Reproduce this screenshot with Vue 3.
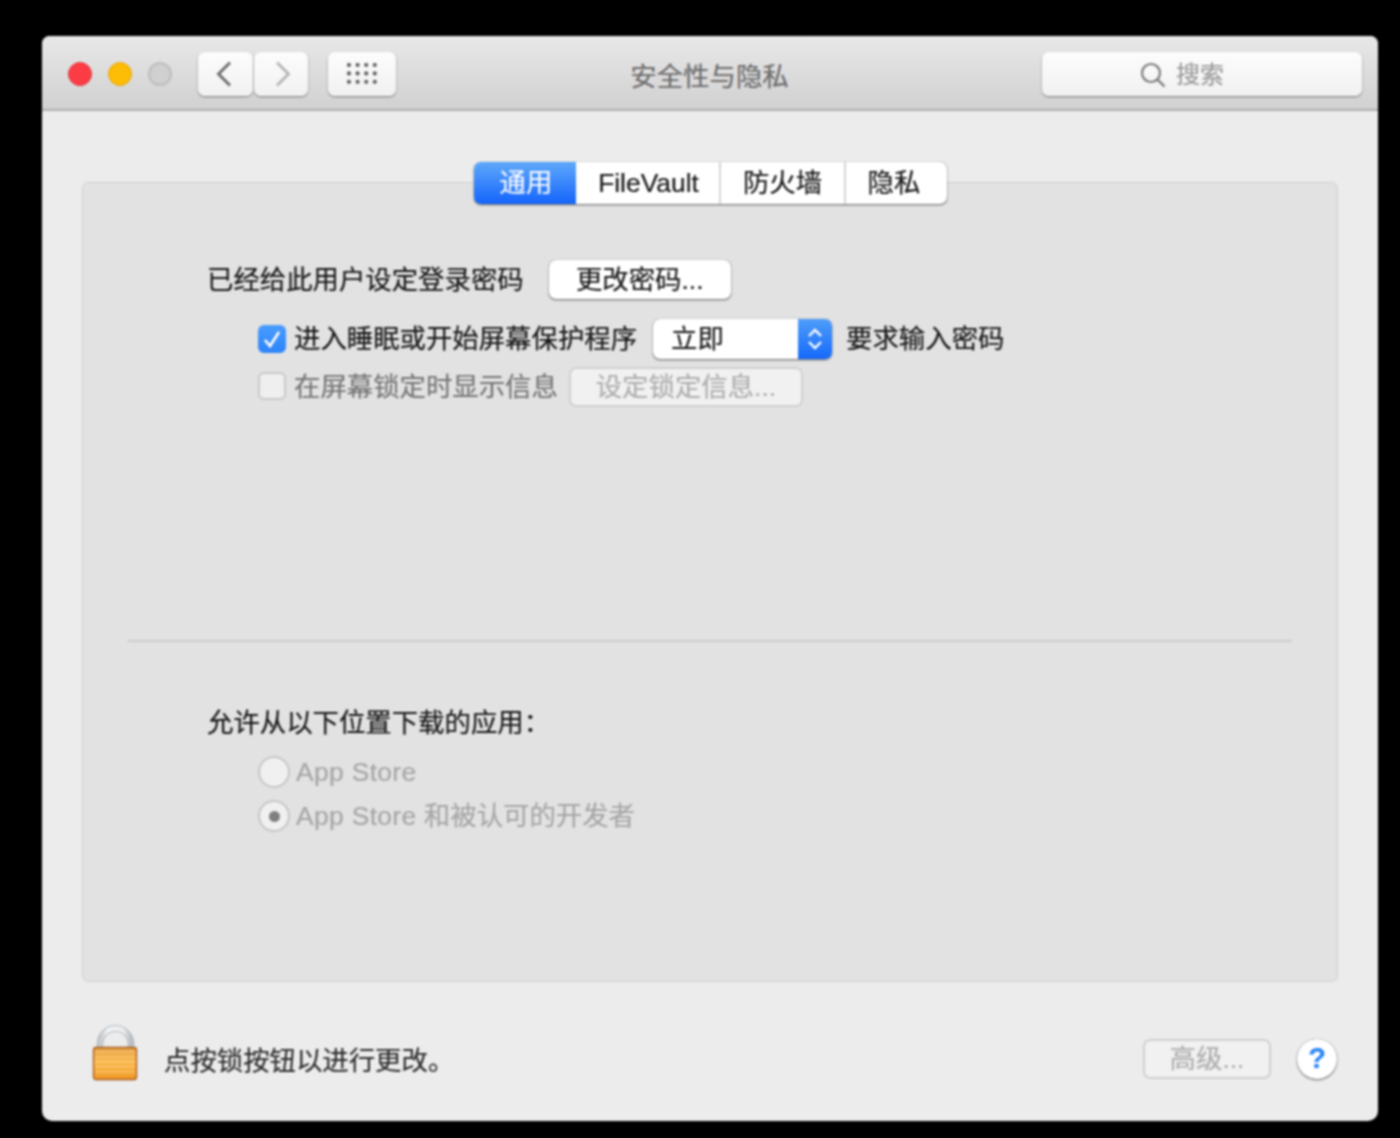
<script setup>
const tabs = [
  { label: '通用', width: 102, active: true, cls: 'nudge-right' },
  { label: 'FileVault', width: 145, cls: 'nudge-right' },
  { label: '防火墙', width: 125 },
  { label: '隐私', width: 101, cls: 'nudge-left' }
]
const dots = Array.from({ length: 12 }, (_, i) => ({ cx: 2 + (i % 4) * 8.6, cy: 2 + Math.floor(i / 4) * 8.4 }))
const stripes = [1051, 1056, 1061, 1066, 1071]
</script>

<template>
  <div class="window">
    <header class="titlebar">
      <div class="bar-left">
        <div class="lights">
          <span class="light red"></span>
          <span class="light yellow"></span>
          <span class="light grey"></span>
        </div>
        <div class="nav">
          <button class="tool nav-btn back">
            <svg width="16" height="26" viewBox="0 0 16 26"><path d="M14 1.5 2.5 13 14 24.5" fill="none" stroke="#6a6a6a" stroke-width="2.8" /></svg>
          </button>
          <button class="tool nav-btn next">
            <svg width="16" height="26" viewBox="0 0 16 26"><path d="M2 1.5 13.5 13 2 24.5" fill="none" stroke="#b5b5b5" stroke-width="2.8" /></svg>
          </button>
        </div>
        <button class="tool grid-btn">
          <svg width="30" height="21" viewBox="0 0 30 21"><circle v-for="(d, i) in dots" :key="i" :cx="d.cx" :cy="d.cy" r="2.1" fill="#5f5f5f" /></svg>
        </button>
      </div>
      <h1 class="title">安全性与隐私</h1>
      <div class="bar-right">
        <div class="tool search">
          <svg width="26" height="26" viewBox="0 0 26 26"><circle cx="11" cy="11" r="9" fill="none" stroke="#7b7b7b" stroke-width="2.2" /><path d="m17.5 17.5 7 7" stroke="#7b7b7b" stroke-width="2.4" /></svg>
          <span>搜索</span>
        </div>
      </div>
    </header>

    <main class="body">
      <nav class="tabs">
        <div
          v-for="t in tabs"
          :key="t.label"
          class="tab"
          :class="[{ active: t.active }, t.cls]"
          :style="{ width: t.width + 'px' }"
        >{{ t.label }}</div>
      </nav>

      <section class="panel">
        <div class="upper">
          <div class="row row-password">
            <span class="label">已经给此用户设定登录密码</span>
            <button class="btn change">更改密码...</button>
          </div>
          <div class="row row-sleep">
            <span class="check on">
              <svg width="20" height="20" viewBox="0 0 20 20"><path d="m3 11 5 6 9-14" fill="none" stroke="#fff" stroke-width="2.6" /></svg>
            </span>
            <span class="label">进入睡眠或开始屏幕保护程序</span>
            <div class="select">
              <span class="select-value">立即</span>
              <span class="select-arrows">
                <svg width="16" height="24" viewBox="0 0 16 24"><path d="m2 9 6-6 6 6M2 15l6 6 6-6" fill="none" stroke="#fff" stroke-width="2.4" /></svg>
              </span>
            </div>
            <span class="label">要求输入密码</span>
          </div>
          <div class="row row-lock">
            <span class="check"></span>
            <span class="label dim">在屏幕锁定时显示信息</span>
            <button class="btn disabled set-lock">设定锁定信息...</button>
          </div>
        </div>

        <hr class="divider" />

        <div class="lower">
          <p class="label allow">允许从以下位置下载的应用：</p>
          <div class="radio-row">
            <span class="radio"></span>
            <span class="label faint"><span class="latin">App Store</span></span>
          </div>
          <div class="radio-row">
            <span class="radio selected"><i></i></span>
            <span class="label faint"><span class="latin">App Store</span> 和被认可的开发者</span>
          </div>
        </div>
      </section>

      <footer class="footer">
        <svg class="lock" width="46" height="58" viewBox="0 1024 46 58">
          <defs>
            <linearGradient id="shackle" x1="0" x2="1" y1="0" y2="0">
              <stop offset="0" stop-color="#c4c8cc" />
              <stop offset=".25" stop-color="#f0f3f5" />
              <stop offset=".75" stop-color="#eceff1" />
              <stop offset="1" stop-color="#b9bdc1" />
            </linearGradient>
            <linearGradient id="body" x1="0" x2="0" y1="0" y2="1">
              <stop offset="0" stop-color="#e5a045" />
              <stop offset=".45" stop-color="#fab84e" />
              <stop offset="1" stop-color="#f09a28" />
            </linearGradient>
          </defs>
          <path d="M8 1049v-5a15.5 15.5 0 0 1 31 0v5" fill="none" stroke="#a9adb1" stroke-width="6.5" />
          <path d="M8 1049v-5a15.5 15.5 0 0 1 31 0v5" fill="none" stroke="url(#shackle)" stroke-width="5" />
          <rect x="1.5" y="1047.5" width="43" height="32" rx="2.5" fill="url(#body)" stroke="#a8581c" stroke-width="1.3" />
          <rect v-for="s in stripes" :key="s" x="3" :y="s" width="40" height="1.6" fill="#fdd58a" opacity=".55" />
        </svg>
        <span class="label hint">点按锁按钮以进行更改。</span>
        <button class="btn disabled advanced">高级...</button>
        <button class="help">?</button>
      </footer>
    </main>
  </div>
</template>

<style scoped>
.window {
  width: 1336px;
  height: 1085px;
  margin-left: 42px;
  background: #ececec;
  border-radius: 8px 8px 10px 10px;
  display: flex;
  flex-direction: column;
  overflow: hidden;
  font-family: "Liberation Sans", "Noto Sans CJK SC", sans-serif;
  font-size: 26.4px;
  line-height: 32px;
  color: #161616;
  -webkit-text-stroke: .2px;
  filter: blur(0.8px);
}
.titlebar {
  height: 75px;
  flex: none;
  box-sizing: border-box;
  display: grid;
  grid-template-columns: 1fr auto 1fr;
  align-items: center;
  padding: 2px 16px 0 26px;
  background: linear-gradient(#e9e8e9, #d2d1d2);
  border-bottom: 2px solid #b0afb0;
}
.bar-left { display: flex; align-items: center; }
.bar-right { display: flex; justify-content: flex-end; }
.lights { display: flex; gap: 16px; width: 130px; }
.light { width: 24px; height: 24px; border-radius: 50%; box-sizing: border-box; }
.red { background: #fc3c44; border: 1px solid #e2353f; }
.yellow { background: #fdbc06; border: 1px solid #e5a811; }
.grey { background: #d0d0d0; border: 2px solid #bdbdbd; }
.tool {
  height: 44px;
  box-sizing: border-box;
  border: 0;
  padding: 0;
  border-radius: 7px;
  background: linear-gradient(#fdfdfd, #f1f1f1);
  box-shadow: 0 1px 2px rgba(0, 0, 0, .45);
  display: flex;
  align-items: center;
  justify-content: center;
}
.nav { display: flex; }
.nav-btn { width: 55px; }
.nav-btn.back { padding-right: 4px; }
.nav-btn.next { margin-left: 1px; width: 54px; padding-left: 4px; }
.grid-btn { width: 68px; margin-left: 20px; }
.title {
  margin: 0 11px 0 0;
  padding-top: 6px;
  font-size: 26.4px;
  font-weight: 400;
  color: #6b6b6b;
}
.search {
  width: 320px;
  gap: 10px;
  font-size: 24px;
  color: #999;
  padding: 2px 40px 0 0;
}
.body {
  flex: 1;
  padding: 51px 40px 0;
  display: flex;
  flex-direction: column;
  min-height: 0;
}
.tabs {
  position: relative;
  z-index: 1;
  align-self: flex-start;
  margin: 0 0 -22px 392px;
  display: flex;
  height: 42px;
  background: #fff;
  border-radius: 7px;
  box-shadow: 0 1px 2px rgba(0, 0, 0, .55), 0 0 1px rgba(0, 0, 0, .5);
  overflow: hidden;
}
.tab {
  display: flex;
  align-items: center;
  justify-content: center;
  box-sizing: border-box;
  color: #161616;
  border-right: 2px solid #d6d6d6;
}
.tab:last-child { border-right: 0; }
.nudge-right { padding-left: 2px; }
.nudge-left { padding-right: 5px; }
.tab.active {
  color: #f7faff;
  border-right: 0;
  background: linear-gradient(#5fa8fb, #1464fb);
}
.panel {
  height: 800px;
  box-sizing: border-box;
  flex: none;
  background: #e2e2e2;
  border: 1px solid #d0d0d0;
  border-radius: 6px;
  padding-top: 77px;
}
.upper { padding-left: 124px; height: 380px; box-sizing: border-box; }
.row { display: flex; align-items: center; }
.row-password { height: 40px; gap: 25px; }
.row-sleep { height: 40px; margin: 19px 0 0 51px; }
.row-lock { height: 40px; margin: 8px 0 0 51px; }
.row-lock .check { margin-bottom: 3px; }
.label { white-space: nowrap; }
.dim { color: #757575; }
.faint { color: #a6a6a6; }
.latin { letter-spacing: .35px; }
.check {
  width: 28px;
  height: 28px;
  margin-right: 8px;
  box-sizing: border-box;
  border-radius: 6px;
  background: #efefef;
  border: 2px solid #c9c9c9;
  display: flex;
  align-items: center;
  justify-content: center;
}
.check.on { background: linear-gradient(#4a9cfd, #2d84fb); border: 0; }
.btn {
  box-sizing: border-box;
  height: 40px;
  padding: 0;
  border: 0;
  border-radius: 7px;
  background: #fff;
  font: inherit;
  color: #161616;
  box-shadow: 0 1px 2px rgba(0, 0, 0, .55), 0 0 1px rgba(0, 0, 0, .5);
}
.btn.disabled {
  background: #f1f1f1;
  color: #adadad;
  box-shadow: 0 0 0 2px #cfcfcf inset;
}
.change { width: 182px; height: 39px; margin-bottom: 1px; }
.set-lock { width: 234px; margin-left: 11px; }
.select {
  width: 179px;
  height: 40px;
  margin: 0 14px 0 16px;
  display: flex;
  background: #fff;
  border-radius: 7px;
  overflow: hidden;
  box-shadow: 0 1px 2px rgba(0, 0, 0, .55), 0 0 1px rgba(0, 0, 0, .5);
}
.select-value { flex: 1; padding-left: 18px; line-height: 40px; }
.select-arrows {
  width: 34px;
  display: flex;
  align-items: center;
  justify-content: center;
  background: linear-gradient(#4f9dfa, #1569fb);
}
.divider {
  margin: 0 45px;
  height: 2px;
  border: 0;
  background: #cbcbcb;
}
.lower { padding-left: 124px; }
.allow { margin: 65px 0 0; height: 32px; }
.radio-row {
  display: flex;
  align-items: center;
  gap: 6px;
  height: 32px;
  margin-left: 51px;
}
.allow + .radio-row { margin-top: 17px; }
.radio-row + .radio-row { margin-top: 12px; }
.radio {
  width: 32px;
  height: 32px;
  box-sizing: border-box;
  border-radius: 50%;
  background: #f0f0f0;
  border: 2px solid #c6c6c6;
  display: flex;
  align-items: center;
  justify-content: center;
}
.radio i { width: 11px; height: 11px; border-radius: 50%; background: #7f7f7f; }
.footer {
  display: flex;
  align-items: center;
  padding-top: 50px;
  height: 55px;
}
.lock { margin: -14px 0 0 10px; flex: none; }
.hint { margin: 2px 0 0 26px; color: #2c2c2c; }
.advanced { width: 128px; margin: 0 0 2px auto; }
.help {
  width: 40px;
  height: 40px;
  margin: 0 1px 2px 26px;
  padding: 0;
  border: 0;
  border-radius: 50%;
  background: #fff;
  color: #2a84f8;
  font: 700 29px "Liberation Sans", sans-serif;
  box-shadow: 0 1px 2px rgba(0, 0, 0, .55), 0 0 1px rgba(0, 0, 0, .5);
}
</style>

<style>
html, body { background: #000; }
#app { padding-top: 36px; height: 1138px; box-sizing: border-box; overflow: hidden; }
</style>
